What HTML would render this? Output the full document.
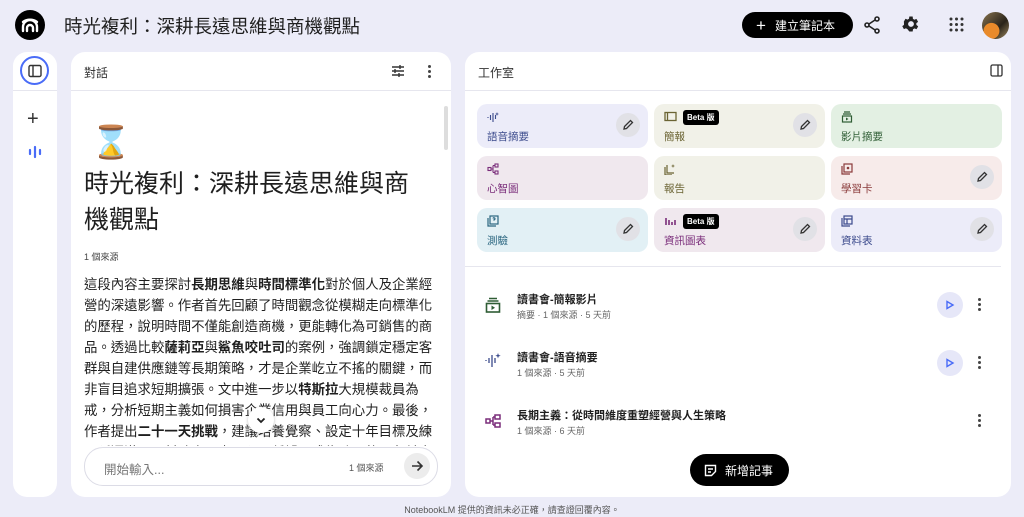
<!DOCTYPE html>
<html><head><meta charset="utf-8"><style>
*{box-sizing:border-box;margin:0;padding:0}
body{width:1024px;height:517px;background:#ECECF8;font-family:"Liberation Sans","Noto Sans CJK TC",sans-serif;color:#1f1f1f;position:relative;overflow:hidden}
.abs{position:absolute}
.panel{position:absolute;background:#fff;border-radius:14px}
.card{position:absolute;width:171px;height:44px;border-radius:10px}
.card .ic{position:absolute;left:10px;top:7px}
.card .lb{position:absolute;left:10px;top:25px;font-size:10.5px}
.card .ed{position:absolute;right:8px;top:9px;width:24px;height:24px;border-radius:50%;background:#E1E1E6;display:flex;align-items:center;justify-content:center}
.beta{position:absolute;top:6px;left:29px;background:#000;color:#fff;font-size:8px;font-weight:bold;padding:2px 4px;border-radius:3px}
.row .t{position:absolute;left:52px;font-size:11px;font-weight:bold;color:#1f1f1f}
.row .s{position:absolute;left:52px;font-size:9px;color:#666}
.dots{position:absolute;width:3px}
.dots i{display:block;width:3px;height:3px;border-radius:50%;background:#444;margin-bottom:2px}
.play{position:absolute;width:26px;height:26px;border-radius:50%;background:#E6E7F8;display:flex;align-items:center;justify-content:center}
p.body{font-size:13.4px;line-height:21px;color:#1f1f1f}
b{font-weight:bold}
</style></head><body>
<div class="abs" style="left:15px;top:10px;width:30px;height:30px;border-radius:50%;background:#000">
<svg width="30" height="30" viewBox="0 0 30 30"><g fill="none" stroke="#fff" stroke-width="2.4" stroke-linecap="round"><path d="M8 21 V17 A7 7 0 0 1 22 17 V21"/><path d="M12 21 V18 A3 3 0 0 1 18 18 V21"/><path d="M8 12 A10 8 0 0 1 22 12"/></g></svg></div>
<div class="abs" style="left:64px;top:13px;font-size:18.5px;color:#1f1f1f">時光複利：深耕長遠思維與商機觀點</div>
<div class="abs" style="left:742px;top:12px;width:111px;height:26px;border-radius:13px;background:#000;color:#fff;font-size:12px;display:flex;align-items:center;padding-left:14px"><span style="font-size:17px;margin-right:9px;line-height:1">+</span>建立筆記本</div>
<svg class="abs" style="left:862px;top:15px" width="20" height="20" viewBox="0 0 20 20"><g fill="none" stroke="#222" stroke-width="1.6"><circle cx="15" cy="4" r="2"/><circle cx="5" cy="10" r="2"/><circle cx="15" cy="16" r="2"/><path d="M7 9L13 5M7 11L13 15"/></g></svg>
<svg class="abs" style="left:901px;top:14px" width="20" height="20" viewBox="0 0 24 24"><path fill="#222" d="M19.4 13a7.5 7.5 0 0 0 0-2l2.1-1.6-2-3.5-2.5 1a7 7 0 0 0-1.7-1L15 3h-4l-.4 2.7a7 7 0 0 0-1.7 1l-2.5-1-2 3.5L4.6 11a7.5 7.5 0 0 0 0 2l-2.1 1.6 2 3.5 2.5-1a7 7 0 0 0 1.7 1L11 21h4l.4-2.7a7 7 0 0 0 1.7-1l2.5 1 2-3.5zM13 15.5A3.5 3.5 0 1 1 13 8.5a3.5 3.5 0 0 1 0 7z" transform="translate(-1 0)"/></svg>
<svg class="abs" style="left:949px;top:17px" width="15" height="15" viewBox="0 0 15 15"><g fill="#333"><circle cx="2" cy="2" r="1.5"/><circle cx="7.5" cy="2" r="1.5"/><circle cx="13" cy="2" r="1.5"/><circle cx="2" cy="7.5" r="1.5"/><circle cx="7.5" cy="7.5" r="1.5"/><circle cx="13" cy="7.5" r="1.5"/><circle cx="2" cy="13" r="1.5"/><circle cx="7.5" cy="13" r="1.5"/><circle cx="13" cy="13" r="1.5"/></g></svg>
<div class="abs" style="left:982px;top:12px;width:27px;height:27px;border-radius:50%;background:radial-gradient(circle at 35% 70%,#e98a2a 0 30%,transparent 32%),linear-gradient(135deg,#8a7550,#2a241a 60%,#a08a60)"></div>

<div class="panel" style="left:13px;top:52px;width:44px;height:445px">
<div class="abs" style="left:7px;top:4px;width:29px;height:29px;border-radius:50%;border:2px solid #4A6CF7;display:flex;align-items:center;justify-content:center"><svg width="14" height="14" viewBox="0 0 14 14"><rect x="1" y="1.5" width="12" height="11" rx="1.5" fill="none" stroke="#333" stroke-width="1.4"/><path d="M5 2v10" stroke="#333" stroke-width="1.4"/></svg></div>
<div class="abs" style="left:0;top:38px;width:44px;height:1px;background:#e6e6ee"></div>
<div class="abs" style="left:14px;top:57px;font-size:20px;color:#333;line-height:20px">+</div>
<svg class="abs" style="left:15px;top:93px" width="14" height="14" viewBox="0 0 14 14"><g stroke="#4A6CF7" stroke-width="2.2" stroke-linecap="round"><path d="M2 5v4M7 2v10M12 5v4"/></g></svg>
</div>

<div class="panel" style="left:71px;top:52px;width:380px;height:445px;overflow:hidden">
<div class="abs" style="left:13px;top:12px;font-size:12px;color:#333">對話</div>
<svg class="abs" style="left:320px;top:12px" width="14" height="14" viewBox="0 0 14 14"><g stroke="#333" stroke-width="1.4"><path d="M1 3h12M1 7h12M1 11h12"/><path d="M9 1v4M4 5v4M8 9v4"/></g></svg>
<div class="dots" style="left:357px;top:13px"><i></i><i></i><i></i></div>
<div class="abs" style="left:0;top:38px;width:380px;height:1px;background:#e6e6ee"></div>
<div class="abs" style="left:373px;top:54px;width:4px;height:44px;border-radius:2px;background:#ddd"></div>
<div class="abs" style="left:20px;top:70px;font-size:32px;line-height:40px">⌛</div>
<div class="abs" style="left:13px;top:114px;font-size:25px;line-height:36px;width:340px;color:#1f1f1f">時光複利：深耕長遠思維與商機觀點</div>
<div class="abs" style="left:13px;top:198px;font-size:9px;color:#444">1 個來源</div>
<div class="abs" style="left:13px;top:222px;width:354px;height:172px;overflow:hidden">
<p class="body">這段內容主要探討<b>長期思維</b>與<b>時間標準化</b>對於個人及企業經營的深遠影響。作者首先回顧了時間觀念從模糊走向標準化的歷程，說明時間不僅能創造商機，更能轉化為可銷售的商品。透過比較<b>薩莉亞</b>與<b>鯊魚咬吐司</b>的案例，強調鎖定穩定客群與自建供應鏈等長期策略，才是企業屹立不搖的關鍵，而非盲目追求短期擴張。文中進一步以<b>特斯拉</b>大規模裁員為戒，分析短期主義如何損害企業信用與員工向心力。最後，作者提出<b>二十一天挑戰</b>，建議培養覺察、設定十年目標及練習延遲滿足，幫助大眾克服心理偏誤，成為時間的朋友並享受複利。</p></div>
<div class="abs" style="left:177px;top:355px;width:26px;height:26px;border-radius:50%;background:#fff;box-shadow:0 1px 3px rgba(0,0,0,.25);display:flex;align-items:center;justify-content:center"><svg width="12" height="12" viewBox="0 0 12 12"><path d="M2.5 4.5L6 8l3.5-3.5" fill="none" stroke="#222" stroke-width="1.8"/></svg></div>
<div class="abs" style="left:13px;top:395px;width:354px;height:39px;border-radius:19px;border:1px solid #dcdce6;background:#fff"></div>
<div class="abs" style="left:33px;top:407px;font-size:12.5px;color:#777">開始輸入...</div>
<div class="abs" style="left:278px;top:409px;font-size:9px;color:#555">1 個來源</div>
<div class="abs" style="left:333px;top:401px;width:26px;height:26px;border-radius:50%;background:#ececec;display:flex;align-items:center;justify-content:center"><svg width="14" height="14" viewBox="0 0 14 14"><path d="M2 7h10M7.5 2.5L12 7l-4.5 4.5" fill="none" stroke="#333" stroke-width="1.6"/></svg></div>
</div>

<div class="panel" style="left:465px;top:52px;width:546px;height:445px">
<div class="abs" style="left:13px;top:12px;font-size:12px;color:#333">工作室</div>
<svg class="abs" style="left:525px;top:12px" width="13" height="13" viewBox="0 0 13 13"><rect x="1" y="1" width="11" height="11" rx="1.5" fill="none" stroke="#333" stroke-width="1.3"/><path d="M8 1v11" stroke="#333" stroke-width="1.3"/></svg>
<div class="abs" style="left:0;top:38px;width:546px;height:1px;background:#e6e6ee"></div>

<div class="card" style="left:12px;top:52px;background:#ECECF9"><svg class="ic" width="12" height="12" viewBox="0 0 12 12"><g stroke="#3b4a8c" stroke-width="1.1"><path d="M1 6v1M3.5 4v5M6 2v9M8.5 4v4"/></g><path d="M10 1l.5 1.5L12 3l-1.5.5L10 5l-.5-1.5L8 3l1.5-.5z" fill="#3b4a8c"/></svg><div class="lb" style="color:#3b4a8c">語音摘要</div><div class="ed"><svg width="12" height="12" viewBox="0 0 12 12"><path d="M2 10l.5-2.5L8.5 1.5 10.5 3.5 4.5 9.5z" fill="none" stroke="#333" stroke-width="1.3"/></svg></div></div>
<div class="card" style="left:189px;top:52px;background:#F1F1E8"><svg class="ic" width="13" height="11" viewBox="0 0 13 11"><rect x="1" y="1.5" width="11" height="8" fill="none" stroke="#6b6433" stroke-width="1.3"/><path d="M3.5 1.5v8" stroke="#6b6433" stroke-width="1.3"/></svg><span class="beta">Beta 版</span><div class="lb" style="color:#6b6433">簡報</div><div class="ed"><svg width="12" height="12" viewBox="0 0 12 12"><path d="M2 10l.5-2.5L8.5 1.5 10.5 3.5 4.5 9.5z" fill="none" stroke="#333" stroke-width="1.3"/></svg></div></div>
<div class="card" style="left:366px;top:52px;background:#E3F0E3"><svg class="ic" width="12" height="12" viewBox="0 0 12 12"><g fill="none" stroke="#2f5d35" stroke-width="1.2"><path d="M3 1h6M2 3h8"/><rect x="1.5" y="5" width="9" height="6"/></g><path d="M5 6.5v3l2.5-1.5z" fill="#2f5d35"/></svg><div class="lb" style="color:#2f5d35">影片摘要</div></div>
<div class="card" style="left:12px;top:104px;background:#F0E8EE"><svg class="ic" width="12" height="12" viewBox="0 0 12 12"><g fill="none" stroke="#7a2d7a" stroke-width="1.1"><rect x="1" y="4.5" width="3" height="3"/><rect x="8" y="1" width="3" height="3"/><rect x="8" y="8" width="3" height="3"/><path d="M4 6h2M6 2.5v7M6 2.5h2M6 9.5h2"/></g></svg><div class="lb" style="color:#7a2d7a">心智圖</div></div>
<div class="card" style="left:189px;top:104px;background:#F1F1E8"><svg class="ic" width="12" height="12" viewBox="0 0 12 12"><g fill="none" stroke="#6b6433" stroke-width="1.2"><path d="M3 2v8h7M1 4v8h7" /></g><path d="M9 1l.5 1.5L11 3l-1.5.5L9 5l-.5-1.5L7 3l1.5-.5z" fill="#6b6433"/></svg><div class="lb" style="color:#6b6433">報告</div></div>
<div class="card" style="left:366px;top:104px;background:#F7EBEA"><svg class="ic" width="12" height="12" viewBox="0 0 12 12"><g fill="none" stroke="#8a3a3a" stroke-width="1.2"><rect x="3" y="1" width="8" height="8"/><path d="M1 3v8h8"/></g><circle cx="7" cy="5" r="1.3" fill="#8a3a3a"/></svg><div class="lb" style="color:#8a3a3a">學習卡</div><div class="ed"><svg width="12" height="12" viewBox="0 0 12 12"><path d="M2 10l.5-2.5L8.5 1.5 10.5 3.5 4.5 9.5z" fill="none" stroke="#333" stroke-width="1.3"/></svg></div></div>
<div class="card" style="left:12px;top:156px;background:#E2F0F5"><svg class="ic" width="12" height="12" viewBox="0 0 12 12"><g fill="none" stroke="#2b6680" stroke-width="1.2"><rect x="3" y="1" width="8" height="8"/><path d="M1 3v8h8"/><path d="M6 3.5a1 1 0 1 1 1 1.3v.8"/></g></svg><div class="lb" style="color:#2b6680">測驗</div><div class="ed"><svg width="12" height="12" viewBox="0 0 12 12"><path d="M2 10l.5-2.5L8.5 1.5 10.5 3.5 4.5 9.5z" fill="none" stroke="#333" stroke-width="1.3"/></svg></div></div>
<div class="card" style="left:189px;top:156px;background:#F0E8EE"><svg class="ic" width="12" height="12" viewBox="0 0 12 12"><g stroke="#7a2d7a" stroke-width="1.6"><path d="M2 3v7M5 5v5M8 7v3M11 5v5"/></g></svg><span class="beta">Beta 版</span><div class="lb" style="color:#7a2d7a">資訊圖表</div><div class="ed"><svg width="12" height="12" viewBox="0 0 12 12"><path d="M2 10l.5-2.5L8.5 1.5 10.5 3.5 4.5 9.5z" fill="none" stroke="#333" stroke-width="1.3"/></svg></div></div>
<div class="card" style="left:366px;top:156px;background:#ECECF9"><svg class="ic" width="12" height="12" viewBox="0 0 12 12"><g fill="none" stroke="#3b4a8c" stroke-width="1.2"><rect x="3" y="1" width="8" height="8"/><path d="M1 3v8h8M3 4h8M6 4v5"/></g></svg><div class="lb" style="color:#3b4a8c">資料表</div><div class="ed"><svg width="12" height="12" viewBox="0 0 12 12"><path d="M2 10l.5-2.5L8.5 1.5 10.5 3.5 4.5 9.5z" fill="none" stroke="#333" stroke-width="1.3"/></svg></div></div>

<div class="abs" style="left:0;top:214px;width:536px;height:1px;background:#e6e6ee"></div>

<div class="row">
<svg class="abs" style="left:20px;top:245px" width="16" height="16" viewBox="0 0 16 16"><g fill="none" stroke="#2f5d35" stroke-width="1.6"><path d="M4 1.5h8M2.5 4h11"/><rect x="1.5" y="6.5" width="13" height="8.5"/></g><path d="M6.5 8.5v4.5l3.5-2.2z" fill="#2f5d35"/></svg>
<div class="t" style="top:239px">讀書會-簡報影片</div><div class="s" style="top:256px">摘要 · 1 個來源 · 5 天前</div>
<div class="play" style="left:472px;top:240px"><svg width="10" height="10" viewBox="0 0 10 10"><path d="M2 1.5v7l6-3.5z" fill="none" stroke="#4A6CF7" stroke-width="1.4"/></svg></div>
<div class="dots" style="left:513px;top:246px"><i></i><i></i><i></i></div>

<svg class="abs" style="left:20px;top:300px" width="16" height="16" viewBox="0 0 16 16"><g stroke="#3b4a8c" stroke-width="1.3"><path d="M1 8v1M4 6v5M7 3v12M10 6v5"/></g><path d="M13 1l.7 2 2 .7-2 .7-.7 2-.7-2-2-.7 2-.7z" fill="#3b4a8c"/></svg>
<div class="t" style="top:297px">讀書會-語音摘要</div><div class="s" style="top:314px">1 個來源 · 5 天前</div>
<div class="play" style="left:472px;top:298px"><svg width="10" height="10" viewBox="0 0 10 10"><path d="M2 1.5v7l6-3.5z" fill="none" stroke="#4A6CF7" stroke-width="1.4"/></svg></div>
<div class="dots" style="left:513px;top:304px"><i></i><i></i><i></i></div>

<svg class="abs" style="left:20px;top:362px" width="16" height="14" viewBox="0 0 16 14"><g fill="none" stroke="#7a2d7a" stroke-width="1.5"><rect x="1" y="5" width="4" height="4"/><rect x="10" y="1" width="5" height="4"/><rect x="10" y="9" width="5" height="4"/><path d="M5 7h3M8 3v8M8 3h2M8 11h2"/></g></svg>
<div class="t" style="top:355px">長期主義：從時間維度重塑經營與人生策略</div><div class="s" style="top:372px">1 個來源 · 6 天前</div>
<div class="dots" style="left:513px;top:362px"><i></i><i></i><i></i></div>
</div>

<div class="abs" style="left:225px;top:402px;width:99px;height:32px;border-radius:16px;background:#000;color:#fff;font-size:12px;display:flex;align-items:center;padding-left:14px"><svg width="13" height="13" viewBox="0 0 13 13" style="margin-right:8px"><g fill="none" stroke="#fff" stroke-width="1.4"><path d="M1.5 1.5h10v6l-4 4h-6z"/><path d="M4 5h5M4 8h3"/></g></svg>新增記事</div>
</div>

<div class="abs" style="left:0;top:503px;width:1024px;text-align:center;font-size:9px;color:#555">NotebookLM 提供的資訊未必正確，請查證回覆內容。</div>
</body></html>
